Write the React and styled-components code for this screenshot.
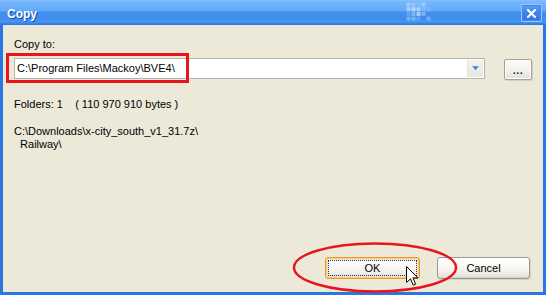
import React from "react";
import styled, { createGlobalStyle } from "styled-components";

const GlobalStyle = createGlobalStyle`
  html, body { margin: 0; padding: 0; background: #ece9d8; }
  body { font-family: "Liberation Sans", Arial, sans-serif; }
`;

const Window = styled.div`
  position: relative;
  width: 546px;
  height: 295px;
  box-sizing: border-box;
  display: flex;
  flex-direction: column;
  background: #2a77e4;
  overflow: hidden;
`;

const TitleBar = styled.div`
  height: 25px;
  flex: none;
  display: flex;
  align-items: flex-start;
  position: relative;
  background: linear-gradient(
    to bottom,
    #8cc4ff 0px,
    #78b8fd 1px,
    #6cb0fb 6px,
    #62a9f9 11px,
    #4290ee 12px,
    #3f8cec 19px,
    #4a96f2 22px,
    #3a86ea 23px,
    #2a77e4 25px
  );
`;

const Title = styled.span`
  margin: 8px 0 0 7px;
  font-family: "Liberation Sans", Arial, sans-serif;
  font-weight: bold;
  font-size: 12px;
  line-height: 13px;
  color: #ffffff;
  text-shadow: 1px 1px 0 #1b4fae;
`;

const Dots = styled.svg`
  position: absolute;
  left: 406px;
  top: 2px;
`;

const CloseButton = styled.button`
  margin: 4px 4px 0 auto;
  width: 21px;
  height: 18px;
  padding: 0;
  box-sizing: border-box;
  border: 1px solid #9cc6fa;
  border-radius: 2px;
  background: linear-gradient(to bottom, #5ea0f5, #3c84ea 50%, #2f75e0);
  box-shadow: inset 0 0 0 1px #3f86ea;
  display: flex;
  align-items: center;
  justify-content: center;
`;

const Body = styled.div`
  flex: 1;
  margin: 0 3px 3px 3px;
  background: #ece9d8;
  display: flex;
  flex-direction: column;
  padding: 13px 11px 13px 11px;
  font-family: "Liberation Sans", Arial, sans-serif;
  font-size: 11px;
  line-height: 13px;
  color: #000;
`;

const Label = styled.div`
  height: 13px;
`;

const PathRow = styled.div`
  margin-top: 7px;
  display: flex;
  align-items: flex-start;
  gap: 19px;
`;

const Combo = styled.div`
  width: 471px;
  height: 21px;
  box-sizing: border-box;
  border: 1px solid #b4b3ad;
  background: #fff;
  display: flex;
  align-items: stretch;
`;

const ComboText = styled.div`
  flex: 1;
  padding: 3px 0 0 2px;
  white-space: pre;
`;

const DropButton = styled.div`
  width: 15px;
  margin: 1px 1px 1px 0;
  border-left: 1px solid #e4e2da;
  background: linear-gradient(to bottom, #f4f3ef, #e8e6df);
  display: flex;
  align-items: center;
  justify-content: center;
`;

const SmallButton = styled.button`
  margin-top: 1px;
  width: 28px;
  height: 21px;
  padding: 0 0 3px 0;
  box-sizing: border-box;
  border: 1px solid #a3a299;
  border-radius: 2px;
  background: linear-gradient(to bottom, #fbfbf8, #f2f1ec 55%, #e2e0d7);
  box-shadow: inset 0 0 0 1px #ffffff, 1px 1px 0 #d2d0c6;
  font-family: "Liberation Sans", Arial, sans-serif;
  font-size: 11px;
  font-weight: bold;
  color: #1c2a6a;
  display: flex;
  align-items: flex-end;
  justify-content: center;
  letter-spacing: 0.5px;
`;

const Info = styled.div`
  margin-top: 18px;
  white-space: pre;
`;

const SourceList = styled.div`
  margin-top: 14px;
  white-space: pre;
`;

const ButtonRow = styled.div`
  margin-top: auto;
  display: flex;
  justify-content: flex-end;
  gap: 17px;
  padding-right: 2px;
`;

const Button = styled.button`
  position: relative;
  width: ${(p) => (p.$default ? 95 : 93)}px;
  height: 22px;
  box-sizing: border-box;
  padding: 0;
  border-radius: 3px;
  font-family: "Liberation Sans", Arial, sans-serif;
  font-size: 11px;
  color: #000;
  border: 1px solid ${(p) => (p.$default ? "#e7992a" : "#9a998f")};
  background: linear-gradient(to bottom, #ffffff, #f5f4ef 60%, #e1dfd5);
  box-shadow: ${(p) =>
    p.$default
      ? "inset 0 0 0 1px #fcc978, inset 0 0 0 2px #fde4b6"
      : "inset 0 -1px 0 #d6d4ca, 1px 1px 0 #d6d4ca"};
  &::after {
    content: "";
    display: ${(p) => (p.$default ? "block" : "none")};
    position: absolute;
    inset: 2px;
    border: 1px dotted #1a2ca0;
  }
`;

const RedBox = styled.div`
  position: absolute;
  left: 6px;
  top: 53px;
  width: 183px;
  height: 30px;
  box-sizing: border-box;
  border: 3px solid #e8161c;
  pointer-events: none;
`;

const Overlay = styled.svg`
  position: absolute;
  left: ${(p) => p.$x}px;
  top: ${(p) => p.$y}px;
  pointer-events: none;
  overflow: visible;
`;

const dots = [
  [0, 0, 0.55], [1, 0, 0.45], [2, 0, 0.2], [3, 0, 0.55],
  [0, 1, 0.7], [1, 1, 0.85], [2, 1, 0.75], [3, 1, 0.25], [4, 1, 0.2],
  [0, 2, 0.25], [1, 2, 0.5], [2, 2, 0.8], [3, 2, 0.45],
  [0, 3, 0.45], [1, 3, 0.45], [2, 3, 0.25], [4, 3, 0.4],
];

export default function App() {
  return (
    <>
      <GlobalStyle />
      <Window>
        <TitleBar>
          <Title>Copy</Title>
          <Dots width="26" height="20" viewBox="0 0 26 20">
            {dots.map(([c, r, o], i) => (
              <rect key={i} x={c * 5 + 0.5} y={r * 4.7 + 0.5} width="4" height="4" fill="#bfe0ff" opacity={o} />
            ))}
          </Dots>
          <CloseButton aria-label="Close">
            <svg width="9" height="9" viewBox="0 0 9 9">
              <path d="M1 1 L8 8 M8 1 L1 8" stroke="#fff" strokeWidth="2" strokeLinecap="square" />
            </svg>
          </CloseButton>
        </TitleBar>
        <Body>
          <Label>Copy to:</Label>
          <PathRow>
            <Combo>
              <ComboText>C:\Program Files\Mackoy\BVE4\</ComboText>
              <DropButton>
                <svg width="7" height="5" viewBox="0 0 7 5">
                  <path d="M0 0 H7 L3.5 4.5 Z" fill="#5d9bf2" />
                  <path d="M2 1 H5 L3.5 3 Z" fill="#2d6fe0" />
                </svg>
              </DropButton>
            </Combo>
            <SmallButton>...</SmallButton>
          </PathRow>
          <Info>Folders: 1    ( 110 970 910 bytes )</Info>
          <SourceList>
            {"C:\\Downloads\\x-city_south_v1_31.7z\\\n  Railway\\"}
          </SourceList>
          <ButtonRow>
            <Button $default>OK</Button>
            <Button>Cancel</Button>
          </ButtonRow>
        </Body>
        <RedBox />
        <Overlay $x={292} $y={242} width="166" height="51" viewBox="0 0 166 51">
          <ellipse cx="83" cy="25.5" rx="81" ry="24" fill="none" stroke="#e8161c" strokeWidth="2.5" />
        </Overlay>
        <Overlay $x={406} $y={266} width="13" height="21" viewBox="0 0 13 21">
          <path
            d="M0.5 0.5 L0.5 16.5 L4.5 12.8 L7.2 19.2 L9.6 18.2 L7 11.9 L12 11.9 Z"
            fill="#fff"
            stroke="#000"
            strokeWidth="1"
            strokeLinejoin="miter"
          />
        </Overlay>
      </Window>
    </>
  );
}
